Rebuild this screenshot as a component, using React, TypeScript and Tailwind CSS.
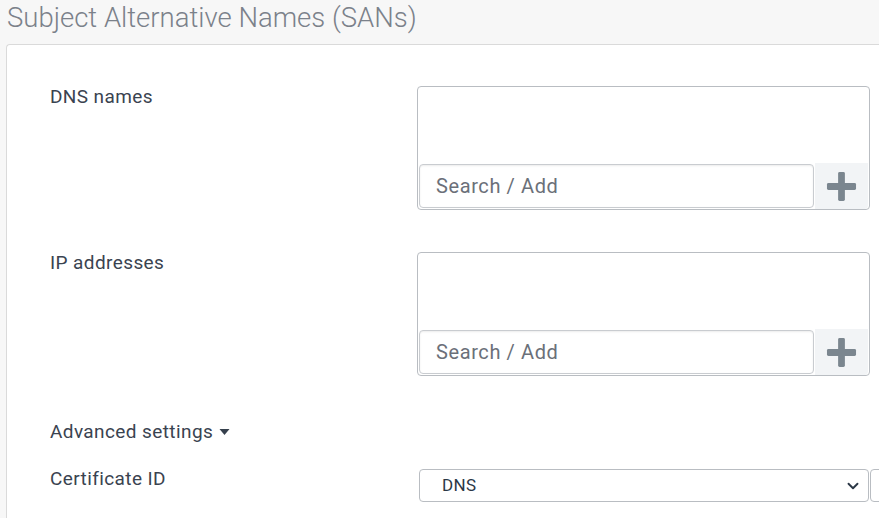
import { ChevronDown } from "lucide-react";

function PlusIcon() {
  return (
    <svg viewBox="0 0 32 32" className="w-[31px] h-[31px]">
      <rect x="12.5" y="1" width="7" height="30" rx="1.5" fill="#7b868f" />
      <rect x="1" y="12.5" width="30" height="7" rx="1.5" fill="#7b868f" />
    </svg>
  );
}

function TagBox() {
  return (
    <div className="shrink-0 w-[453px] h-[124px] border border-[#b9bdc2] rounded-[4px] flex flex-col justify-end bg-white">
      <div className="flex h-[46px]">
        <div className="flex-1 m-[1px] border border-[#c9ccd0] rounded-[4px] shadow-[inset_0_1px_2px_rgba(0,0,0,0.08)] flex items-center pl-[16px] text-[20px] tracking-[0.6px] text-[#6b7079]">
          Search / Add
        </div>
        <div className="w-[53px] mr-[1px] bg-[#f2f4f6] rounded-br-[4px] flex items-center justify-center">
          <PlusIcon />
        </div>
      </div>
    </div>
  );
}

export default function App() {
  return (
    <div
      className="h-[518px] w-[879px] overflow-hidden bg-[#f7f7f7]"
      style={{ fontFamily: "Roboto, 'Liberation Sans', sans-serif" }}
    >
      <h1 className="pl-[7px] pt-[1px] h-[44px] text-[27.5px] leading-[34px] font-light text-[#7b818a]">
        Subject Alternative Names (SANs)
      </h1>
      <div className="ml-[6px] w-[900px] h-[480px] bg-white border-l border-t border-[#dadada] rounded-tl-[4px] pt-[41px] pl-[43px] text-[19px] tracking-[0.4px] text-[#3a4350]">
        <div className="flex">
          <div className="w-[367px] shrink-0 leading-[22px]">DNS names</div>
          <TagBox />
        </div>
        <div className="flex mt-[42px]">
          <div className="w-[367px] shrink-0 leading-[22px]">IP addresses</div>
          <TagBox />
        </div>
        <div className="mt-[45px] flex items-center gap-[6px] leading-[22px]">
          Advanced settings
          <svg viewBox="0 0 10 6" className="w-[11px] h-[6px]">
            <path d="M0 0h10L5 6z" fill="#36404d" />
          </svg>
        </div>
        <div className="flex mt-[26px]">
          <div className="w-[369px] shrink-0 leading-[22px] -mt-[1px]">Certificate ID</div>
          <div className="shrink-0 w-[450px] h-[33px] border border-[#b9bdc2] rounded-[4px] flex items-center pl-[22px] pr-[6px] justify-between text-[17px] tracking-[0.3px] text-[#2b3746]">
            <span>DNS</span>
            <ChevronDown className="w-[18px] h-[18px] text-[#2b3746]" strokeWidth={2.5} />
          </div>
          <div className="shrink-0 ml-[1px] w-[40px] h-[33px] border border-[#b9bdc2] rounded-[4px]" />
        </div>
      </div>
    </div>
  );
}
